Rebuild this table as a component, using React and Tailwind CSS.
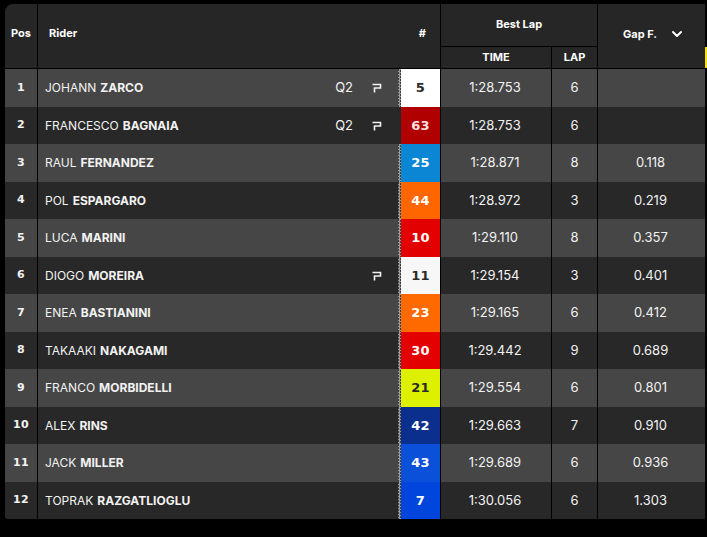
import React from 'react';
import { ChevronDown } from 'lucide-react';

const riders = [
  { pos: 1, first: 'JOHANN', last: 'ZARCO', q2: true, p: true, num: '5', bg: 'bg-[#ffffff]', fg: 'text-[#2a2a2a]', check: true, time: '1:28.753', lap: 6, gap: '' },
  { pos: 2, first: 'FRANCESCO', last: 'BAGNAIA', q2: true, p: true, num: '63', bg: 'bg-[#b00000]', fg: 'text-[#ffe0e0]', check: false, time: '1:28.753', lap: 6, gap: '' },
  { pos: 3, first: 'RAUL', last: 'FERNANDEZ', num: '25', bg: 'bg-[#0a86d4]', fg: 'text-white', check: true, time: '1:28.871', lap: 8, gap: '0.118' },
  { pos: 4, first: 'POL', last: 'ESPARGARO', num: '44', bg: 'bg-[#ff6600]', fg: 'text-white', check: true, time: '1:28.972', lap: 3, gap: '0.219' },
  { pos: 5, first: 'LUCA', last: 'MARINI', num: '10', bg: 'bg-[#e20000]', fg: 'text-white', check: true, time: '1:29.110', lap: 8, gap: '0.357' },
  { pos: 6, first: 'DIOGO', last: 'MOREIRA', p: true, num: '11', bg: 'bg-[#f7f7f7]', fg: 'text-[#2a2a2a]', check: true, time: '1:29.154', lap: 3, gap: '0.401' },
  { pos: 7, first: 'ENEA', last: 'BASTIANINI', num: '23', bg: 'bg-[#ff6a00]', fg: 'text-white', check: true, time: '1:29.165', lap: 6, gap: '0.412' },
  { pos: 8, first: 'TAKAAKI', last: 'NAKAGAMI', num: '30', bg: 'bg-[#e20000]', fg: 'text-white', check: true, time: '1:29.442', lap: 9, gap: '0.689' },
  { pos: 9, first: 'FRANCO', last: 'MORBIDELLI', num: '21', bg: 'bg-[#dcf000]', fg: 'text-[#2a2a2a]', check: true, time: '1:29.554', lap: 6, gap: '0.801' },
  { pos: 10, first: 'ALEX', last: 'RINS', num: '42', bg: 'bg-[#0b2f8c]', fg: 'text-white', check: true, time: '1:29.663', lap: 7, gap: '0.910' },
  { pos: 11, first: 'JACK', last: 'MILLER', num: '43', bg: 'bg-[#0a50d8]', fg: 'text-white', check: true, time: '1:29.689', lap: 6, gap: '0.936' },
  { pos: 12, first: 'TOPRAK', last: 'RAZGATLIOGLU', num: '7', bg: 'bg-[#0045dc]', fg: 'text-white', check: true, time: '1:30.056', lap: 6, gap: '1.303' },
];

function PoleIcon() {
  return (
    <svg width="10" height="10" viewBox="0 0 10 10" className="block">
      <path d="M0.5 1.5 H8.5 V5 H2.5 V9.5" fill="none" stroke="#f2f2f2" strokeWidth="1.6" />
    </svg>
  );
}

const digitFont = "font-['DejaVu_Sans',sans-serif] font-bold";

function Row({ r }) {
  const light = r.pos % 2 === 1;
  const h = light ? 'h-[38px]' : 'h-[37px]';
  const bg = light ? 'bg-[#464646]' : 'bg-[#282828]';
  return (
    <div className={`flex ${h} ${bg} text-[#f2f2f2]`}>
      <div className="w-[33px] border-r border-black flex items-center justify-center text-[11px] tracking-wide font-['DejaVu_Sans',sans-serif] font-semibold">
        {r.pos}
      </div>
      <div className="w-[360px] flex items-center pl-[7px] pr-[16px] text-[12px]">
        <span className="font-normal">{r.first}</span>
        <span className="font-bold ml-[4px]">{r.last}</span>
        <span className="flex-1" />
        {r.q2 && <span className="text-[13px] mr-[19px]">Q2</span>}
        {r.p && <PoleIcon />}
      </div>
      <div className={`w-[3px] ${r.check ? 'bg-[repeating-conic-gradient(#9a9a9a_0%_25%,#3c3c3c_0%_50%)] bg-size-[3px_3px]' : ''}`} />
      <div className={`w-[40px] border-r border-black flex items-center justify-center text-[13px] tracking-wide ${r.bg} ${r.fg} ${digitFont}`}>
        {r.num}
      </div>
      <div className="w-[111px] border-r border-black flex items-center justify-center text-[13px] pr-[2px]">{r.time}</div>
      <div className="w-[46px] border-r border-black flex items-center justify-center text-[13px]">{r.lap}</div>
      <div className="w-[107px] flex items-center justify-center text-[13px] pr-[2px]">{r.gap}</div>
    </div>
  );
}

export default function App() {
  return (
    <div className="w-[707px] h-[537px] bg-black pt-[4px] pl-[5px] font-['Inter','Liberation_Sans',sans-serif] relative">
      <div className="w-[700px] rounded-tl-[8px] rounded-bl-[3px] overflow-hidden">
        <div className="flex h-[65px] bg-[#262626] border-b border-black text-white text-[11px] font-bold">
          <div className="w-[33px] border-r border-black flex items-center justify-center pb-[6px]">Pos</div>
          <div className="w-[403px] border-r border-black flex items-center justify-between pl-[11px] pr-[14px] pb-[6px]">
            <span>Rider</span>
            <span>#</span>
          </div>
          <div className="w-[157px] border-r border-black flex flex-col">
            <div className="h-[43px] border-b border-black flex items-center justify-center pb-[1px]">Best Lap</div>
            <div className="flex-1 flex">
              <div className="w-[111px] border-r border-black flex items-center justify-center pb-[1px]">TIME</div>
              <div className="flex-1 flex items-center justify-center pb-[1px]">LAP</div>
            </div>
          </div>
          <div className="w-[107px] flex items-center pl-[25px] gap-[12px] pb-[4px]">
            <span>Gap F.</span>
            <ChevronDown size={16} strokeWidth={3} className="text-white" />
          </div>
        </div>
        {riders.map((r) => (
          <Row key={r.pos} r={r} />
        ))}
      </div>
      <div className="absolute left-[705px] top-[47px] w-[2px] h-[21px] bg-[#f2e400]" />
    </div>
  );
}
